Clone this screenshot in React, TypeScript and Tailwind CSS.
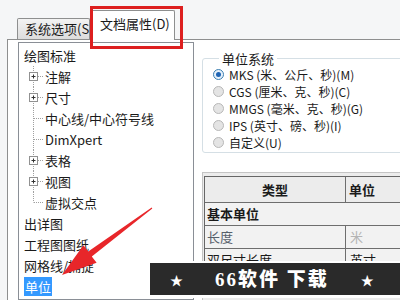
import React from 'react';

const FONT = { fontFamily: '"Noto Sans CJK SC", "Noto Sans", sans-serif' };

type TreeRow = { label: string; level: 0 | 1; box?: boolean; last?: boolean; selected?: boolean };

const rows: TreeRow[] = [
  { label: '绘图标准', level: 0 },
  { label: '注解', level: 1, box: true },
  { label: '尺寸', level: 1, box: true },
  { label: '中心线/中心符号线', level: 1 },
  { label: 'DimXpert', level: 1 },
  { label: '表格', level: 1, box: true },
  { label: '视图', level: 1, box: true },
  { label: '虚拟交点', level: 1, last: true },
  { label: '出详图', level: 0 },
  { label: '工程图图纸', level: 0 },
  { label: '网格线/捕捉', level: 0 },
  { label: '单位', level: 0, selected: true },
];

const radios = [
  'MKS (米、公斤、秒)(M)',
  'CGS (厘米、克、秒)(C)',
  'MMGS (毫米、克、秒)(G)',
  'IPS (英寸、磅、秒)(I)',
  '自定义(U)',
];

// dotted tree connectors + optional expand box
function Connector({ box, last }: { box?: boolean; last?: boolean }) {
  return (
    <svg width="21" height="21" className="shrink-0">
      <line x1="9.5" y1="0" x2="9.5" y2={last ? 10.5 : 21} stroke="#a0a0a0" strokeDasharray="1 1" />
      <line x1="10" y1="10.5" x2="19" y2="10.5" stroke="#a0a0a0" strokeDasharray="1 1" />
      {box && (
        <g>
          <rect x="5.5" y="6.5" width="8" height="8" fill="#fff" stroke="#919191" />
          <line x1="7.5" y1="10.5" x2="11.5" y2="10.5" stroke="#333" />
          <line x1="9.5" y1="8.5" x2="9.5" y2="12.5" stroke="#333" />
        </g>
      )}
    </svg>
  );
}

function Radio({ checked }: { checked?: boolean }) {
  return checked ? (
    <span className="w-[11px] h-[11px] rounded-full border border-[#3c7fb1] bg-[#e6f1fa] flex items-center justify-center shrink-0">
      <span className="w-[5px] h-[5px] rounded-full bg-[#1e64b4]" />
    </span>
  ) : (
    <span className="w-[11px] h-[11px] rounded-full border border-[#b8b8b8] bg-[#e4e4e4] shrink-0" />
  );
}

export default function App() {
  return (
    <div className="relative w-[400px] h-[300px] overflow-hidden bg-[#f5f6f7] flex text-[#1a1a1a]" style={FONT}>
      <div className="w-[3px] bg-[#d6e4f1]" />
      <div className="flex-1 flex flex-col pl-[7px]">
        {/* tabs */}
        <div className="h-[39px] flex items-end pl-[10px]">
          <div className="w-[73px] h-[21px] overflow-hidden whitespace-nowrap border border-b-0 border-[#8e8f8f] rounded-t-[2px] bg-gradient-to-b from-[#f3f3f3] to-[#dcdcdc] pl-[7px] text-[13px] leading-[20px]">
            系统选项(S)
          </div>
          <div className="relative z-10 -mb-px w-[85px] h-[30px] border border-b-0 border-[#8e8f8f] rounded-t-[2px] bg-white pl-[9px] pt-[4px] text-[13px] leading-[18px] whitespace-nowrap">
            文档属性(D)
          </div>
        </div>

        {/* page */}
        <div className="flex-1 flex border-t border-l border-[#8e8f8f] bg-white">
          <div className="ml-[10px] mt-[2px] w-[176px] border border-[#8a8f96] pt-[2px] pl-[5px]">
            {rows.map((r) => (
              <div key={r.label} className="h-[21px] flex items-center text-[13px] whitespace-nowrap">
                {r.level === 1 && <Connector box={r.box} last={r.last} />}
                <span className={r.selected ? 'bg-[#3399ff] text-white px-[1px] leading-[19px]' : 'leading-[19px]'}>
                  {r.label}
                </span>
              </div>
            ))}
          </div>

          <div className="flex-1 flex flex-col pl-[8px]">
            <fieldset className="mt-[12px] w-[220px] border border-[#d5dfe5] rounded-[3px] pl-[10px] pt-[1px] pb-[1px]">
              <legend className="ml-[6px] px-[3px] text-[13px] leading-[13px]">单位系统</legend>
              {radios.map((t, i) => (
                <div key={t} className="h-[17px] flex items-center gap-[5px] text-[12px] leading-[15px] whitespace-nowrap">
                  <Radio checked={i === 0} />
                  <span>{t}</span>
                </div>
              ))}
            </fieldset>

            <div className="mt-[19px] flex-1 border-t border-l border-[#c4c4c4] bg-[#ececec] pl-[1px] pt-[3px]">
              <div className="border-t border-l border-[#666] bg-[#f2f2f2] text-[13px]">
                <div className="flex h-[26px] border-b border-[#6e6e6e] bg-[#ececec] font-bold">
                  <div className="w-[141px] border-r border-[#6e6e6e] flex items-center justify-center">类型</div>
                  <div className="flex-1 flex items-center pl-[3px]">单位</div>
                </div>
                <div className="h-[23px] border-b border-[#6e6e6e] flex items-center pl-[2px] font-bold">基本单位</div>
                <div className="flex h-[23px] border-b border-[#6e6e6e]">
                  <div className="w-[141px] border-r border-[#6e6e6e] flex items-center pl-[2px] text-[#56606b]">长度</div>
                  <div className="flex-1 flex items-center pl-[4px] text-[#b4b4b4]">米</div>
                </div>
                <div className="flex h-[23px] border-b border-[#6e6e6e]">
                  <div className="w-[141px] border-r border-[#6e6e6e] flex items-center pl-[2px]">双尺寸长度</div>
                  <div className="flex-1 flex items-center pl-[4px]">英寸</div>
                </div>
              </div>
            </div>
          </div>
        </div>
      </div>

      {/* red highlight around active tab */}
      <div className="absolute left-[90px] top-[6px] w-[93px] h-[43px] border-[3px] border-[#dd1f1f] z-20" />

      {/* red arrow */}
      <svg className="absolute left-0 top-0 z-20 pointer-events-none" width="400" height="300">
        <polygon
          points="152.3,208.4 91.8,256.4 96.6,262.8 62,275 83.4,245.2 88.2,251.6 151.7,207.6"
          fill="#e8262a"
        />
      </svg>

      {/* watermark banner */}
      <div className="absolute left-[150px] top-[261px] w-[250px] h-[37px] bg-white pt-[2px] z-30">
        <div className="h-[32px] bg-[#2a2a2a] flex items-center text-white">
          <span className="ml-[20px] text-[13px] leading-none">★</span>
          <span
            className="ml-[32px] text-[19px] font-black tracking-[2px] leading-none"
            style={{ fontFamily: '"Liberation Serif", "Noto Sans CJK SC", serif' }}
          >
            66软件 下载
          </span>
          <span className="ml-[32px] text-[13px] leading-none">★</span>
        </div>
      </div>
    </div>
  );
}
